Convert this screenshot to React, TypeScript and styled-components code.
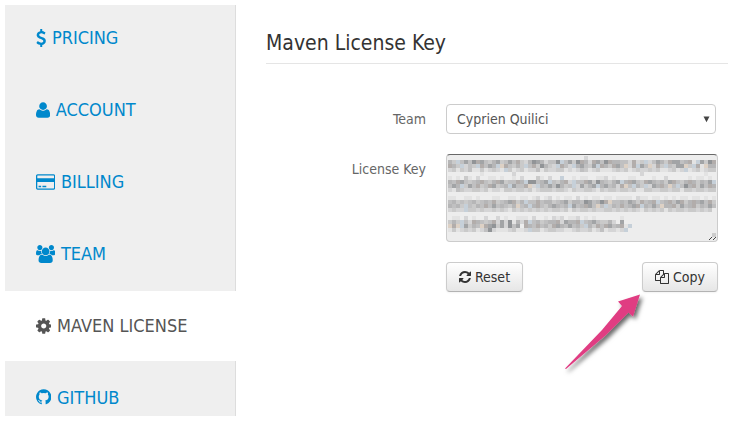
import React from "react";
import styled, { createGlobalStyle, css } from "styled-components";

const GlobalStyle = createGlobalStyle`
  *, *::before, *::after { box-sizing: border-box; }
  body {
    margin: 0;
    background: #fff;
    color: #555;
    font-family: "DejaVu Sans Condensed", "DejaVu Sans", sans-serif;
    font-stretch: condensed;
    overflow: hidden;
  }
`;

const Page = styled.div`
  display: flex;
  width: 733px;
  height: 421px;
  padding: 5px 5px 5px 5px;
`;

const Sidebar = styled.nav`
  display: flex;
  flex-direction: column;
  justify-content: flex-end;
  gap: 2px;
  width: 231px;
  height: 411px;
  flex: none;
  overflow: hidden;
  background: #efefef;
  box-shadow: inset -1px 0 #ddd;
`;

const NavItem = styled.a<{ $active?: boolean; $last?: boolean }>`
  display: flex;
  align-items: center;
  flex: none;
  gap: 5.6px;
  height: ${(p) => (p.$last ? 55 : 70)}px;
  padding: ${(p) => (p.$last ? "18px 0 0 31px" : "0 0 0 31px")};
  ${(p) => p.$last && css`margin-top: -2px;`}
  color: ${(p) => (p.$active ? "#555" : "#0088cc")};
  background: ${(p) => (p.$active ? "#fff" : "transparent")};
  font-size: 18px;
  line-height: 20px;
  white-space: nowrap;

  & > svg { margin-bottom: 0.8px; }
`;

const Glyph = styled.svg`
  display: block;
  flex: none;
  fill: currentColor;
`;

const Content = styled.main`
  display: flex;
  flex-direction: column;
  width: 462px;
  margin-left: 30px;
`;

const Title = styled.h1`
  margin: 0 0 40px;
  height: 59px;
  padding-top: 18px;
  border-bottom: 1px solid #e5e5e5;
  color: #333;
  font-size: 21px;
  font-weight: 400;
  line-height: 40px;
`;

const FieldRow = styled.div`
  display: grid;
  grid-template-columns: 160px 272px;
  column-gap: 20px;
  margin-bottom: 20px;
`;

const Label = styled.label`
  text-align: right;
  color: #666;
  font-size: 14px;
  line-height: 20px;
  padding-top: 5px;
`;

const Select = styled.div`
  display: flex;
  align-items: center;
  justify-content: space-between;
  width: 270px;
  height: 30px;
  padding: 0 5px 0 10px;
  border: 1px solid #ccc;
  border-radius: 4px;
  color: #555;
  font-size: 14px;
  line-height: 20px;
`;

const KeyArea = styled.div`
  width: 272px;
  height: 88px;
  border: 1px solid #ccc;
  border-top-color: #686868;
  border-radius: 4px;
  background: #ededed;
  overflow: hidden;
`;

const Actions = styled.div`
  display: flex;
  justify-content: space-between;
  width: 272px;
  margin-left: 180px;
`;

const Button = styled.button<{ $width: number }>`
  display: flex;
  align-items: center;
  justify-content: center;
  gap: 4px;
  width: ${(p) => p.$width}px;
  height: 30px;
  padding: 0;
  border: 1px solid #ccc;
  border-bottom-color: #b3b3b3;
  border-radius: 4px;
  background: linear-gradient(#fff, #e6e6e6);
  box-shadow: inset 0 1px 0 rgba(255, 255, 255, 0.2), 0 1px 2px rgba(0, 0, 0, 0.05);
  color: #333;
  font-family: inherit;
  font-stretch: inherit;
  font-size: 14px;
  line-height: 20px;
`;

const Pointer = styled.svg`
  position: absolute;
  left: 555px;
  top: 285px;
  overflow: visible;
  pointer-events: none;
`;

type IconData = { x: number; w: number; d: string };

const icons: Record<string, IconData> = {
  dollar: {
    x: 384,
    w: 1024,
    d: "M1362 1185q0 153-99.5 263.5t-258.5 136.5v175q0 14-9 23t-23 9h-135q-13 0-22.5-9.5t-9.5-22.5v-175q-66-9-127.5-31t-101.5-44.5-74-48-46.5-37.5-17.5-18q-17-21-2-41l103-135q7-10 23-12 15-2 24 9l2 2q113 99 243 125 37 8 74 8 81 0 142.5-43t61.5-122q0-28-15-53t-33.5-42-58.5-37.5-66-32-80-32.5q-39-16-61.5-25t-61.5-26.5-62.5-31-56.5-35.5-53.5-42.5-43.5-49-35.5-58-21-66.5-8.5-78q0-138 98-242t255-134v-180q0-13 9.5-22.5t22.5-9.5h135q14 0 23 9t9 23v176q57 6 110.5 23t87 33.5 63.5 37.5 39 29 15 14q17 18 5 38l-81 146q-8 15-23 16-14 3-27-7-3-3-14.5-12t-39-26.5-58.5-32-74.5-26-85.5-11.5q-95 0-155 43t-60 111q0 26 8.5 48t29.5 41.5 39.5 33 56 31 60.5 27 70 27.5q53 20 81 31.5t76 35 75.5 42.5 62 50 53 63.5 31.5 76.5 13 94z",
  },
  user: {
    x: 192,
    w: 1408,
    d: "M1600 1405q0 120-73 189.5t-194 69.5h-874q-121 0-194-69.5t-73-189.5q0-53 3.5-103.5t14-109 26.5-108.5 43-97.5 62-81 85.5-53.5 111.5-20q9 0 42 21.5t74.5 48 108 48 133.5 21.5 133.5-21.5 108-48 74.5-48 42-21.5q61 0 111.5 20t85.5 53.5 62 81 43 97.5 26.5 108.5 14 109 3.5 103.5zm-320-893q0 159-112.5 271.5t-271.5 112.5-271.5-112.5-112.5-271.5 112.5-271.5 271.5-112.5 271.5 112.5 112.5 271.5z",
  },
  card: {
    x: 0,
    w: 1920,
    d: "M1760 128q66 0 113 47t47 113v1216q0 66-47 113t-113 47h-1600q-66 0-113-47t-47-113v-1216q0-66 47-113t113-47h1600zm-1600 128q-13 0-22.5 9.5t-9.5 22.5v224h1664v-224q0-13-9.5-22.5t-22.5-9.5h-1600zm1600 1280q13 0 22.5-9.5t9.5-22.5v-608h-1664v608q0 13 9.5 22.5t22.5 9.5h1600zm-1504-128v-128h256v128h-256zm384 0v-128h384v128h-384z",
  },
  users: {
    x: 0,
    w: 1920,
    d: "M593 896q-162 5-265 128h-134q-82 0-138-40.5t-56-118.5q0-353 124-353 6 0 43.5 21t97.5 42.5 119 21.5q67 0 133-23-5 37-5 66 0 139 81 256zm1071 637q0 120-73 189.5t-194 69.5h-874q-121 0-194-69.5t-73-189.5q0-53 3.5-103.5t14-109 26.5-108.5 43-97.5 62-81 85.5-53.5 111.5-20q10 0 43 21.5t73 48 107 48 135 21.5 135-21.5 107-48 73-48 43-21.5q61 0 111.5 20t85.5 53.5 62 81 43 97.5 26.5 108.5 14 109 3.5 103.5zm-1024-1277q0 106-75 181t-181 75-181-75-75-181 75-181 181-75 181 75 75 181zm704 384q0 159-112.5 271.5t-271.5 112.5-271.5-112.5-112.5-271.5 112.5-271.5 271.5-112.5 271.5 112.5 112.5 271.5zm576 225q0 78-56 118.5t-138 40.5h-134q-103-123-265-128 81-117 81-256 0-29-5-66 66 23 133 23 59 0 119-21.5t97.5-42.5 43.5-21q124 0 124 353zm-128-609q0 106-75 181t-181 75-181-75-75-181 75-181 181-75 181 75 75 181z",
  },
  cog: {
    x: 128,
    w: 1536,
    d: "M1152 896q0-106-75-181t-181-75-181 75-75 181 75 181 181 75 181-75 75-181zm512-109v222q0 12-8 23t-20 13l-185 28q-19 54-39 91 35 50 107 138 10 12 10 25t-9 23q-27 37-99 108t-94 71q-12 0-26-9l-138-108q-44 23-91 38-16 136-29 186-7 28-36 28h-222q-14 0-24.5-8.5t-11.5-21.5l-28-184q-49-16-90-37l-141 107q-10 9-25 9-14 0-25-11-126-114-165-168-7-10-7-23 0-12 8-23 15-21 51-66.5t54-70.5q-27-50-41-99l-183-27q-13-2-21-12.5t-8-23.5v-222q0-12 8-23t19-13l186-28q14-46 39-92-40-57-107-138-10-12-10-24 0-10 9-23 26-36 98.5-107.5t94.5-71.5q13 0 26 10l138 107q44-23 91-38 16-136 29-186 7-28 36-28h222q14 0 24.5 8.5t11.5 21.5l28 184q49 16 90 37l142-107q9-9 24-9 13 0 25 10 129 119 165 170 7 8 7 22 0 12-8 23-15 21-51 66.5t-54 70.5q26 50 41 98l183 28q13 2 21 12.5t8 23.5z",
  },
  github: {
    x: 128,
    w: 1536,
    d: "M896 128q209 0 385.5 103t279.5 279.5 103 385.5q0 251-146.5 451.5t-378.5 277.5q-27 5-40-7t-13-30q0-3 .5-76.5t.5-134.5q0-97-52-142 57-6 102.5-18t94-39 81-66.5 53-105 20.5-150.5q0-119-79-206 37-91-8-204-28-9-81 11t-92 44l-38 24q-93-26-192-26t-192 26q-16-11-42.5-27t-83.5-38.5-85-13.5q-45 113-8 204-79 87-79 206 0 85 20.5 150t52.5 105 80.5 67 94 39 102.5 18q-39 36-49 103-21 10-45 15t-57 5-65.5-21.5-55.5-62.5q-19-32-48.5-52t-49.5-24l-20-3q-21 0-29 4.5t-5 11.5 9 14 13 12l7 5q22 10 43.5 38t31.5 51l10 23q13 38 44 61.5t67 30 69.5 7 55.5-3.5l23-4q0 38 .5 88.5t.5 54.5q0 18-13 30t-40 7q-232-77-378.5-277.5t-146.5-451.5q0-209 103-385.5t279.5-279.5 385.5-103z",
  },
  refresh: {
    x: 128,
    w: 1536,
    d: "M1639 1056q0 5-1 7-64 268-268 434.5t-478 166.5q-146 0-282.5-55t-243.5-157l-129 129q-19 19-45 19t-45-19-19-45v-448q0-26 19-45t45-19h448q26 0 45 19t19 45-19 45l-137 137q71 66 161 102t187 36q134 0 250-65t186-179q11-17 53-117 8-23 30-23h192q13 0 22.5 9.5t9.5 22.5zm25-800v448q0 26-19 45t-45 19h-448q-26 0-45-19t-19-45 19-45l138-138q-148-137-349-137-134 0-250 65t-186 179q-11 17-53 117-8 23-30 23h-199q-13 0-22.5-9.5t-9.5-22.5v-7q65-268 270-434.5t480-166.5q146 0 284 55.5t245 156.5l130-129q19-19 45-19t45 19 19 45z",
  },
  copy: {
    x: 0,
    w: 1792,
    d: "M1696 384q40 0 68 28t28 68v1216q0 40-28 68t-68 28h-960q-40 0-68-28t-28-68v-288h-544q-40 0-68-28t-28-68v-672q0-40 20-88t48-76l408-408q28-28 76-48t88-20h416q40 0 68 28t28 68v328q68-40 128-40h416zm-544 213l-299 299h299v-299zm-640-384l-299 299h299v-299zm196 647l316-316v-416h-384v416q0 40-28 68t-68 28h-416v640h512v-256q0-40 20-88t48-76zm956 804v-1152h-384v416q0 40-28 68t-68 28h-416v640h896z",
  },
};

function Icon({ name, size }: { name: string; size: number }) {
  const { x, w, d } = icons[name];
  return (
    <Glyph width={(w / 1792) * size} height={size} viewBox={`${x} 0 ${w} 1792`} aria-hidden>
      <path d={d} />
    </Glyph>
  );
}

// Censored key: each character is one 4px tile, 0 = background, 9 = darkest,
// letters are tinted tiles.
const mosaic = [
  "0000000000000000000000000000000000200000000000000000000000000000000",
  "53b4748674357347463258752448b47386526748655442623b247536774561b7386",
  "653b243b6475bw64353b4638532b642b57437b653674w26b74w263b4377w3b61w55",
  "23132411312321b31231224132233121243123111232312322323112312b1231233",
  "0000000010000000200000000000000000000000000000002000000000000000100",
  "1010310200110100102000310200b0010110011201000110000100200000101101",
  "5467434564356734465b88457b43562b44673854357b5674367545376435653547b",
  "475b37463467345b7446w2b54748534b27357b574526w4b53b27564w4b485637465",
  "2143223323122133233231233323321322332132332332311332233233133233233",
  "0000000000000000000000000000000000000000000000000000000000000000000",
  "1100110100011001101101201201011020101101101111021101101010110110101",
  "4534345345463457635b44645534573554874586w44547536456b45647635657463",
  "5453b435464745435w45b564357545b745674w4b35464576b5474w5563745635474",
  "2322b3323223232132323232323323132332322332323232132323132332332323",
  "0000000000000000000000000000000000000000000000000000000000000000000",
  "011020100200201001110200102120112010100000010",
  "353b4265434627281526b453455627556b45743352070",
  "w6wb7354w6783728470654645367547453b5364674561b",
  "13123231248211123112b33123322112322312412212b",
];

const palette: Record<string, string> = {
  "0": "#ededed",
  "1": "#e3e3e3",
  "2": "#d5d5d6",
  "3": "#cacaca",
  "4": "#c0c0c1",
  "5": "#b6b6b7",
  "6": "#b2adab",
  "7": "#a2a4a6",
  "8": "#919497",
  b: "#c6d0d9",
  w: "#ddd1c5",
};

function RedactedKey() {
  return (
    <svg width="270" height="86" shapeRendering="crispEdges" role="img" aria-label="License key">
      {mosaic.map((row, y) =>
        row
          .split("")
          .map((c, x) =>
            c === "0" ? null : (
              <rect key={`${x}-${y}`} x={1 + x * 4} y={1 + y * 4} width="4" height="4" fill={palette[c]} />
            ),
          ),
      )}
      <rect x="265" y="78" width="4" height="4" fill="#ccc" />
      <g fill="#444">
        {[0, 1, 2].map((i) => (
          <rect key={`a${i}`} x={262 + i} y={84 - i} width="1" height="1" />
        ))}
        {[0, 1, 2].map((i) => (
          <rect key={`b${i}`} x={266 + i} y={84 - i} width="1" height="1" />
        ))}
      </g>
    </svg>
  );
}

const nav = [
  { icon: "dollar", text: "PRICING" },
  { icon: "user", text: "ACCOUNT" },
  { icon: "card", text: "BILLING" },
  { icon: "users", text: "TEAM" },
  { icon: "cog", text: "MAVEN LICENSE", active: true },
  { icon: "github", text: "GITHUB", last: true },
];

export default function App() {
  return (
    <>
      <GlobalStyle />
      <Page>
        <Sidebar>
          {nav.map((n) => (
            <NavItem key={n.text} $active={n.active} $last={n.last}>
              <Icon name={n.icon} size={18} />
              <span>{n.text}</span>
            </NavItem>
          ))}
        </Sidebar>
        <Content>
          <Title>Maven License Key</Title>
          <FieldRow>
            <Label>Team</Label>
            <Select>
              <span>Cyprien Quilici</span>
              <svg width="7" height="7" viewBox="0 0 7 7">
                <path d="M0.5 0.5H6.5L3.5 6.3Z" fill="#444" />
              </svg>
            </Select>
          </FieldRow>
          <FieldRow>
            <Label>License Key</Label>
            <KeyArea>
              <RedactedKey />
            </KeyArea>
          </FieldRow>
          <Actions>
            <Button $width={77}>
              <Icon name="refresh" size={14} />
              <span>Reset</span>
            </Button>
            <Button $width={76}>
              <Icon name="copy" size={14} />
              <span>Copy</span>
            </Button>
          </Actions>
        </Content>
      </Page>
      <Pointer width="100" height="95" viewBox="555 285 100 95">
        <defs>
          <filter id="drop" x="-20%" y="-20%" width="150%" height="150%">
            <feDropShadow dx="2.5" dy="3" stdDeviation="2" floodColor="#000" floodOpacity="0.6" />
          </filter>
        </defs>
        <path
          d="M640 294.5L618 301.5L622 306L602 330L565 368.5L566 369L606 335L628.5 312.5L633 316.5Z"
          fill="#e03c82"
          filter="url(#drop)"
        />
      </Pointer>
    </>
  );
}
